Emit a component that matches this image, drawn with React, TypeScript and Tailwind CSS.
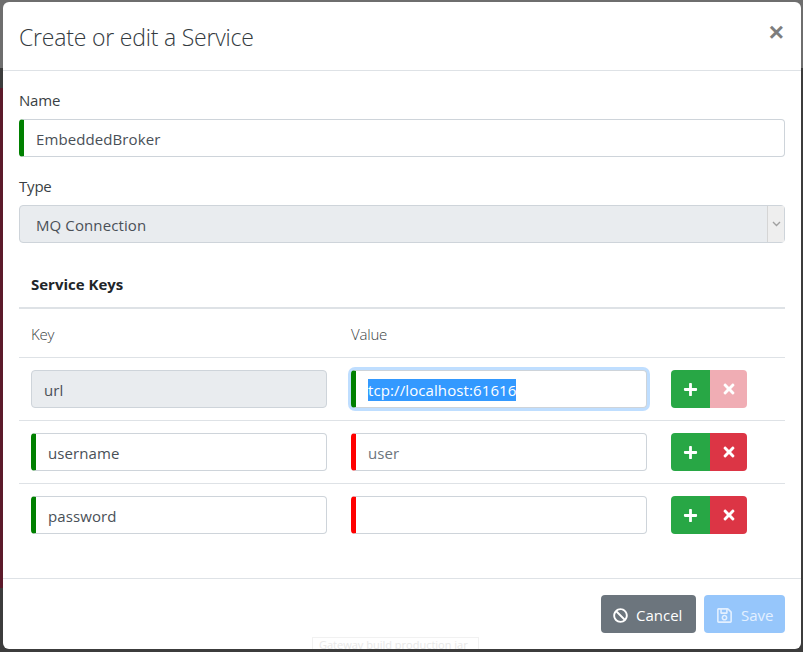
import { FaBan, FaPlus, FaRegSave, FaTimes } from "react-icons/fa";

const font = "font-['Open_Sans',sans-serif]";

interface FieldProps {
  value?: string;
  placeholder?: string;
  mark?: "green" | "red";
  disabled?: boolean;
  focused?: boolean;
  className?: string;
}

const Field = (props: FieldProps) => {
  const { value, placeholder, mark, disabled, focused, className } = props;
  return (
    <div
      className={[
        "flex items-center h-[38px] pt-[2px] rounded border border-[#ced4da] text-[15px] tracking-[0.1px]",
        disabled ? "bg-[#e9ecef]" : "bg-white",
        mark === "green" ? "border-l-[5px] border-l-[#008000] pl-3" : "",
        mark === "red" ? "border-l-[5px] border-l-[#ff0000] pl-3" : "",
        focused ? "border-[#80bdff] shadow-[0_0_0_3px_rgba(0,123,255,0.25)]" : "",
        className ?? "",
      ].join(" ")}
    >
      {focused && value ? (
        <span className="bg-[#3399ff] text-white">{value}</span>
      ) : value ? (
        <span className="text-[#495057]">{value}</span>
      ) : (
        <span className="text-[#6c757d]">{placeholder}</span>
      )}
    </div>
  );
};

interface RowProps {
  name: string;
  nameLocked?: boolean;
  value?: string;
  placeholder?: string;
  valueMark: "green" | "red";
  focused?: boolean;
  removable?: boolean;
  last?: boolean;
}

const KeyRow = (props: RowProps) => {
  const { name, nameLocked, value, placeholder, valueMark, focused, removable, last } = props;
  return (
    <div className={`grid grid-cols-[320px_320px_126px] py-3 ${last ? "" : "border-b border-[#dee2e6]"}`}>
      <div className="px-3">
        {nameLocked ? <Field value={name} disabled className="pl-3" /> : <Field value={name} mark="green" />}
      </div>
      <div className="px-3">
        <Field value={value} placeholder={placeholder} mark={valueMark} focused={focused} />
      </div>
      <div className="flex px-3">
        <button className="flex items-center justify-center w-[39px] h-[38px] rounded-l bg-[#28a745] text-white">
          <FaPlus size={15} />
        </button>
        <button
          className={`flex items-center justify-center w-[37px] h-[38px] rounded-r bg-[#dc3545] text-white ${removable ? "" : "opacity-40"}`}
        >
          <FaTimes size={16} />
        </button>
      </div>
    </div>
  );
};

export default function App() {
  return (
    <div className={`relative w-[803px] h-[652px] overflow-hidden bg-[#3c3c3c] pl-[3px] pt-[2px] text-[#212529] ${font}`}>
      <div className="absolute left-0 top-0 w-full h-[68px] bg-[#6e6e6e]" />
      <div className="absolute left-0 top-[88px] w-[3px] h-[500px] bg-[#5c1a2a]" />

      <div className="relative flex flex-col w-[798px] h-[647px] rounded-md bg-white">
        <div className="flex items-center justify-between h-[69px] px-4 border-b border-[#dee2e6]">
          <h4 className="pt-[2px] text-[23px] font-light text-[#333a40] tracking-[-0.2px]">Create or edit a Service</h4>
          <span className="font-['Liberation_Sans',sans-serif] font-bold text-[26px] leading-none text-[#7d7d7d] mr-[1px] -mt-2">×</span>
        </div>

        <div className="flex-1 px-4 pt-4">
          <div className="w-[766px]">
            <div className="mb-4">
              <label className="block pt-px mb-[7px] leading-6 text-[15px] tracking-[-0.2px] text-[#3a3f44]">Name</label>
              <Field value="EmbeddedBroker" mark="green" />
            </div>
            <div className="mb-4">
              <label className="block pt-px mb-[7px] leading-6 text-[15px] tracking-[-0.2px] text-[#3a3f44]">Type</label>
              <div className="relative">
                <Field value="MQ Connection" disabled className="pl-4" />
                <div className="absolute right-[1px] top-[1px] flex items-center justify-center w-[17px] h-[36px] bg-[#eeeeee] border-l border-[#d5d5d5] text-[#a0a0a0]">
                  <svg width="9" height="6" viewBox="0 0 9 6" fill="none" stroke="currentColor" strokeWidth="1.4">
                    <path d="M1 1l3.5 3.5L8 1" />
                  </svg>
                </div>
              </div>
            </div>

            <div className="px-3 pt-[13px] pb-[11px] leading-6 font-bold text-[15px] border-b-2 border-[#dee2e6]">Service Keys</div>
            <div className="grid grid-cols-[320px_320px_126px] pt-[13px] pb-[11px] leading-6 text-[15px] border-b border-[#dee2e6] tracking-[-0.2px] text-[#3a3f44] font-light">
              <div className="px-3">Key</div>
              <div className="px-3">Value</div>
            </div>
            <KeyRow name="url" nameLocked value="tcp://localhost:61616" valueMark="green" focused />
            <KeyRow name="username" placeholder="user" valueMark="red" removable />
            <KeyRow name="password" valueMark="red" removable last />
          </div>
        </div>

        <div className="flex justify-end gap-2 p-4 border-t border-[#dee2e6]">
          <button className="flex items-center gap-2 w-[95px] h-[38px] pl-3 pt-[2px] rounded bg-[#6c757d] text-white text-[15px]">
            <FaBan size={15} />
            Cancel
          </button>
          <button className="flex items-center gap-2 w-[81px] h-[38px] pl-3 pt-[2px] rounded bg-[#96c6fb] text-[#e3f0ff] text-[15px]">
            <FaRegSave size={17} />
            Save
          </button>
        </div>
      </div>

      <div className="absolute left-[312px] top-[637px] w-[167px] h-[12px] overflow-hidden border border-b-0 border-[#f1f1f1] pl-[6px] text-[11px] leading-[13px] text-[#e8e8e8] whitespace-nowrap">
        Gateway build production jar
      </div>
    </div>
  );
}
